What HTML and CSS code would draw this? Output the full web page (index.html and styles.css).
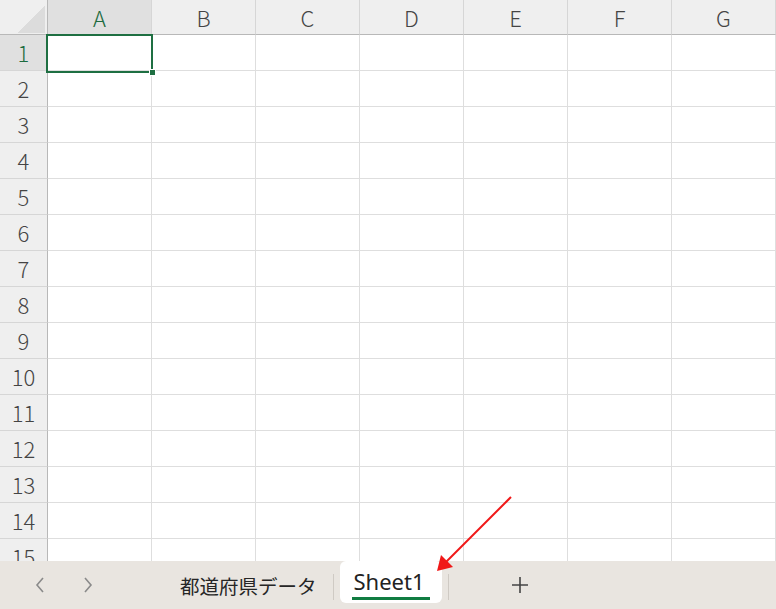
FILE: index.html
```html
<!DOCTYPE html>
<html lang="ja">
<head>
<meta charset="utf-8">
<title>Sheet</title>
<link rel="stylesheet" href="styles.css">
</head>
<body>
<div class="app">
  <div class="sheet">
    <div class="grid">
      <div class="hd corner"><span class="tri"></span></div>
      <div class="hd col sel">A</div>
      <div class="hd col">B</div>
      <div class="hd col">C</div>
      <div class="hd col">D</div>
      <div class="hd col">E</div>
      <div class="hd col">F</div>
      <div class="hd col">G</div>

      <div class="hd row sel">1</div><div class="c"></div><div class="c"></div><div class="c"></div><div class="c"></div><div class="c"></div><div class="c"></div><div class="c"></div>
      <div class="hd row">2</div><div class="c"></div><div class="c"></div><div class="c"></div><div class="c"></div><div class="c"></div><div class="c"></div><div class="c"></div>
      <div class="hd row">3</div><div class="c"></div><div class="c"></div><div class="c"></div><div class="c"></div><div class="c"></div><div class="c"></div><div class="c"></div>
      <div class="hd row">4</div><div class="c"></div><div class="c"></div><div class="c"></div><div class="c"></div><div class="c"></div><div class="c"></div><div class="c"></div>
      <div class="hd row">5</div><div class="c"></div><div class="c"></div><div class="c"></div><div class="c"></div><div class="c"></div><div class="c"></div><div class="c"></div>
      <div class="hd row">6</div><div class="c"></div><div class="c"></div><div class="c"></div><div class="c"></div><div class="c"></div><div class="c"></div><div class="c"></div>
      <div class="hd row">7</div><div class="c"></div><div class="c"></div><div class="c"></div><div class="c"></div><div class="c"></div><div class="c"></div><div class="c"></div>
      <div class="hd row">8</div><div class="c"></div><div class="c"></div><div class="c"></div><div class="c"></div><div class="c"></div><div class="c"></div><div class="c"></div>
      <div class="hd row">9</div><div class="c"></div><div class="c"></div><div class="c"></div><div class="c"></div><div class="c"></div><div class="c"></div><div class="c"></div>
      <div class="hd row">10</div><div class="c"></div><div class="c"></div><div class="c"></div><div class="c"></div><div class="c"></div><div class="c"></div><div class="c"></div>
      <div class="hd row">11</div><div class="c"></div><div class="c"></div><div class="c"></div><div class="c"></div><div class="c"></div><div class="c"></div><div class="c"></div>
      <div class="hd row">12</div><div class="c"></div><div class="c"></div><div class="c"></div><div class="c"></div><div class="c"></div><div class="c"></div><div class="c"></div>
      <div class="hd row">13</div><div class="c"></div><div class="c"></div><div class="c"></div><div class="c"></div><div class="c"></div><div class="c"></div><div class="c"></div>
      <div class="hd row">14</div><div class="c"></div><div class="c"></div><div class="c"></div><div class="c"></div><div class="c"></div><div class="c"></div><div class="c"></div>
      <div class="hd row">15</div><div class="c"></div><div class="c"></div><div class="c"></div><div class="c"></div><div class="c"></div><div class="c"></div><div class="c"></div>
    </div>
    <div class="cursor"><span class="handle"></span></div>
  </div>
  <div class="tabs">
    <div class="nav">
      <svg class="chev" width="12" height="18" viewBox="0 0 12 18"><path d="M9 2 L3 9 L9 16" fill="none" stroke="#8a8a8a" stroke-width="1.6"/></svg>
      <svg class="chev" width="12" height="18" viewBox="0 0 12 18"><path d="M3 2 L9 9 L3 16" fill="none" stroke="#8a8a8a" stroke-width="1.6"/></svg>
    </div>
    <div class="tab">都道府県データ</div>
    <span class="divider"></span>
    <div class="tab active"><span class="label">Sheet1</span></div>
    <span class="divider"></span>
    <div class="add">
      <svg width="20" height="20" viewBox="0 0 20 20"><path d="M10 2 V18 M2 10 H18" stroke="#444" stroke-width="1.6" fill="none"/></svg>
    </div>
  </div>
  <svg class="arrow" width="776" height="609" viewBox="0 0 776 609">
    <line x1="511" y1="497" x2="446" y2="562" stroke="#f01818" stroke-width="2"/>
    <polygon points="437,571 441,555 453,567" fill="#f01818"/>
  </svg>
</div>
</body>
</html>
```

FILE: styles.css
```css
* { box-sizing: border-box; }
html, body {
  margin: 0;
  padding: 0;
  width: 776px;
  height: 609px;
  overflow: hidden;
  background: #fff;
}
.app {
  position: relative;
  width: 776px;
  height: 609px;
  display: flex;
  flex-direction: column;
  font-family: "Noto Sans CJK JP", "Noto Sans", sans-serif;
}
.sheet {
  position: relative;
  height: 561px;
  overflow: hidden;
  flex: none;
}
.grid {
  display: grid;
  grid-template-columns: 48px repeat(7, 104px);
  grid-template-rows: 35px;
  grid-auto-rows: 36px;
}
.hd {
  background: #efefef;
  color: #444;
  font-size: 22px;
  font-weight: 300;
  display: flex;
  align-items: center;
  justify-content: center;
  border-right: 1px solid #d6d6d6;
  border-bottom: 1px solid #d6d6d6;
  line-height: 1;
}
.hd.col { border-bottom-color: #b8b8b8; }
.hd.row { border-right-color: #b8b8b8; padding-bottom: 1px; }
.hd.sel {
  background: #e0e0e0;
  color: #1d6b3f;
}
.corner {
  position: relative;
  border-right-color: #b8b8b8;
  border-bottom-color: #b8b8b8;
}
.corner .tri {
  position: absolute;
  right: 2px;
  bottom: 1px;
  width: 27px;
  height: 27px;
  background: linear-gradient(to bottom right, transparent 50%, #dcdcdc 50%);
}
.c {
  border-right: 1px solid #dedede;
  border-bottom: 1px solid #dedede;
  background: #fff;
}
.cursor {
  position: absolute;
  left: 46px;
  top: 34px;
  width: 107px;
  height: 39px;
  border: 2px solid #1e6f42;
}
.cursor .handle {
  position: absolute;
  right: -5px;
  bottom: -5px;
  width: 7px;
  height: 7px;
  background: #1e6f42;
  border: 1px solid #fff;
}
.tabs {
  flex: 1;
  background: #e9e5e0;
  display: flex;
  align-items: center;
  position: relative;
}
.nav {
  display: flex;
  align-items: center;
  gap: 36px;
  padding-left: 34px;
  width: 164px;
}
.tab {
  font-size: 19.5px;
  color: #262626;
  padding: 0 16px;
  height: 40px;
  display: flex;
  align-items: center;
}
.divider {
  width: 1px;
  height: 26px;
  background: #cfcac4;
  margin-top: 4px;
}
.tab.active {
  background: #fff;
  border-radius: 6px;
  width: 102px;
  margin: 0 6px;
  padding: 0 0 0 14px;
  height: 42px;
  position: relative;
  align-self: flex-start;
  font-family: "Noto Sans", sans-serif;
  font-size: 22px;
  color: #222;
}
.tab.active .label {
  padding-bottom: 3px;
}
.tab.active::after {
  content: "";
  position: absolute;
  left: 12px;
  right: 12px;
  bottom: 3px;
  height: 3px;
  background: #107c41;
}
.add {
  margin-left: 61px;
  display: flex;
  align-items: center;
}
.arrow {
  position: absolute;
  left: 0;
  top: 0;
  pointer-events: none;
}
```
